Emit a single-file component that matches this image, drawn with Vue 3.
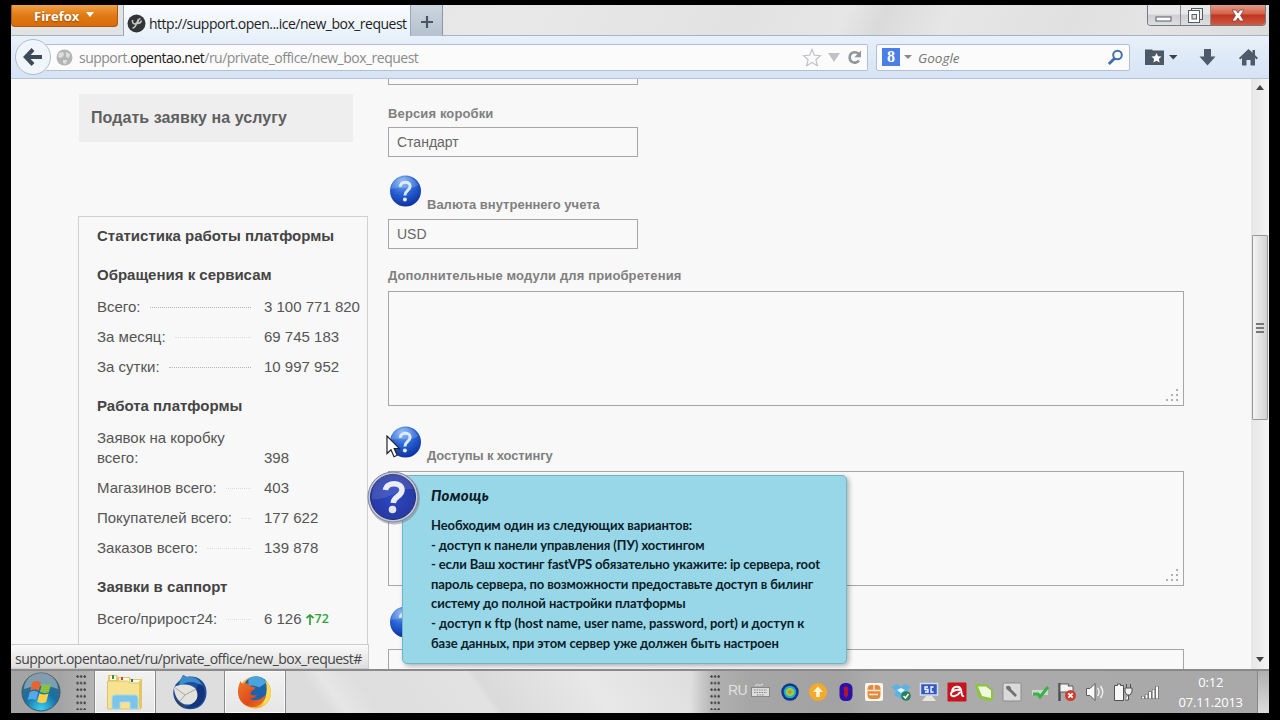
<script setup>
const stats = [
  {
    title: 'Обращения к сервисам',
    rows: [
      { label: 'Всего:', value: '3 100 771 820', dark: true },
      { label: 'За месяц:', value: '69 745 183' },
      { label: 'За сутки:', value: '10 997 952', dark: true }
    ]
  },
  {
    title: 'Работа платформы',
    rows: [
      { label: 'Заявок на коробку всего:', value: '398', double: true },
      { label: 'Магазинов всего:', value: '403' },
      { label: 'Покупателей всего:', value: '177 622' },
      { label: 'Заказов всего:', value: '139 878' }
    ]
  },
  {
    title: 'Заявки в саппорт',
    rows: [{ label: 'Всего/прирост24:', value: '6 126', growth: '72' }]
  }
]

const helpLines = [
  'Необходим один из следующих вариантов:',
  '- доступ к панели управления (ПУ) хостингом',
  '- если Ваш хостинг fastVPS обязательно укажите: ip сервера, root',
  'пароль сервера, по возможности предоставьте доступ в билинг',
  'систему до полной настройки платформы',
  '- доступ к ftp (host name, user name, password, port) и доступ к',
  'базе данных, при этом сервер уже должен быть настроен'
]
</script>

<template>
  <div class="screen">
    <svg class="defs" width="0" height="0">
      <defs>
        <radialGradient id="ball" cx="0.4" cy="0.2" r="0.85">
          <stop offset="0" stop-color="#7fb2f0" />
          <stop offset="0.45" stop-color="#2a66d8" />
          <stop offset="1" stop-color="#0a2c9c" />
        </radialGradient>
        <radialGradient id="bigBall" cx="0.5" cy="0.5" r="0.6">
          <stop offset="0" stop-color="#2c48c4" />
          <stop offset="1" stop-color="#26369c" />
        </radialGradient>
        <radialGradient id="orb" cx="0.5" cy="0.95" r="0.9">
          <stop offset="0" stop-color="#3ad0f4" />
          <stop offset="0.5" stop-color="#1670a4" />
          <stop offset="1" stop-color="#46687e" />
        </radialGradient>
        <linearGradient id="fox" x1="0" y1="0" x2="1" y2="1">
          <stop offset="0" stop-color="#f07a28" />
          <stop offset="0.6" stop-color="#de4a1c" />
          <stop offset="1" stop-color="#e87c22" />
        </linearGradient>
        <symbol id="ask" viewBox="0 0 32 32">
          <circle cx="16.5" cy="16" r="15.5" fill="url(#ball)" />
          <path d="M2 14a14 13 0 0 1 27-4c-6 6-16 1-27 4z" fill="#fff" opacity=".18" />
          <path d="M11.3 11.7c0-6 9.800-6 9.800-.5 0 4.300-5.200 4-5.200 9.300" fill="none" stroke="#dfeafd" stroke-width="3" />
          <circle cx="15.9" cy="24.4" r="2" fill="#dfeafd" />
        </symbol>
      </defs>
    </svg>

    <div class="window">
      <header class="titlebar">
        <div class="menu-button">Firefox<i class="caret white"></i></div>
        <div class="tab">
          <svg width="19" height="19" viewBox="0 0 19 19">
            <circle cx="9.5" cy="9.5" r="9" fill="#333436" />
            <path d="M5.5 6c-.5 4 2.500 5 4.500 2.500l1.500-3.500M10 8.500c-1 3-2 5.500-4.500 5.500M13.500 4.500c-2 0-2.500 3-3 5 2 0 3.500-1 4-3" fill="none" stroke="#c4c4c4" stroke-width="1.5" />
          </svg>
          <span class="tab-title">http://support.open...ice/new_box_request</span>
        </div>
        <div class="new-tab">
          <svg width="12" height="12" viewBox="0 0 12 12"><path d="M6 0v12M0 6h12" stroke="#4a5664" stroke-width="2.2" /></svg>
        </div>
        <div class="controls">
          <div class="ctl">
            <svg width="18" height="6" viewBox="0 0 18 6"><rect x="1" y="1" width="15" height="4" fill="#fff" stroke="#555b66" /></svg>
          </div>
          <div class="ctl restore">
            <svg width="17" height="17" viewBox="0 0 17 17">
              <rect x="4.5" y="1.5" width="11" height="11" fill="#eee" stroke="#555b66" />
              <rect x="1.5" y="3.5" width="11" height="12" fill="#fff" stroke="#555b66" />
              <rect x="5" y="7.5" width="4.5" height="4.5" fill="#ddd" stroke="#555b66" />
            </svg>
          </div>
          <div class="ctl close">
            <svg width="14" height="13" viewBox="0 0 14 13">
              <path d="M1 1h4l2 3 2-3h4L9.500 6.500 13 12H9L7 9l-2 3H1l3.500-5.500z" fill="#fff" stroke="#7c4038" stroke-width=".8" />
            </svg>
          </div>
        </div>
      </header>

      <nav class="toolbar">
        <div class="back">
          <svg width="20" height="18" viewBox="0 0 20 18"><path d="M10 1.500 2.800 9l7.200 7.500M3 9h16" fill="none" stroke="#3e4a58" stroke-width="4" /></svg>
        </div>
        <div class="address">
          <svg class="globe" width="17" height="17" viewBox="0 0 17 17">
            <circle cx="8.5" cy="8.5" r="8" fill="#b4b4b4" />
            <path d="M3 4l4-1 1 3-3 3-3-1zM10 3l4 2-1 4-3-1zM7 11l4 0-1 4-3-1z" fill="#dedede" />
          </svg>
          <span class="url">support.<b>opentao.net</b>/ru/private_office/new_box_request</span>
          <svg class="star" width="20" height="19" viewBox="0 0 20 19"><path d="M10 1.500l2.400 5.700 6.100.5-4.600 4 1.400 6-5.300-3.200-5.300 3.200 1.400-6-4.600-4 6.100-.5z" fill="#fafafa" stroke="#c4c6ca" stroke-width="1.3" /></svg>
          <svg class="drop" width="12" height="9" viewBox="0 0 12 9"><path d="M0 0h12L6 9z" fill="#c0c2c5" /></svg>
          <svg class="reload" width="15" height="15" viewBox="0 0 15 15"><path d="M11.500 3.800A5.200 5.200 0 1 0 12 10.500" fill="none" stroke="#90959a" stroke-width="2.6" /><path d="M14 .5v6.800H7.300z" fill="#90959a" /></svg>
        </div>
        <div class="search">
          <span class="engine">8</span>
          <i class="caret grey"></i>
          <span class="hint">Google</span>
          <svg width="17" height="17" viewBox="0 0 17 17"><circle cx="10.5" cy="6" r="4.3" fill="none" stroke="#4070a6" stroke-width="2" /><path d="M7.500 9.500 1.800 15" stroke="#4070a6" stroke-width="3" /></svg>
        </div>
        <div class="tools">
          <svg width="33" height="17" viewBox="0 0 33 17">
            <path d="M0 .5h7l1 1h11v14.500H0z" fill="#4c5866" />
            <path d="M11.500 4l1.500 3.200 3.500.4-2.600 2.400.7 3.500-3.100-1.700-3.100 1.700.7-3.500L6.500 7.600l3.500-.4z" fill="#fff" />
            <path d="M24 6h8.500l-4.200 4.500z" fill="#38424e" />
          </svg>
          <svg class="down" width="17" height="17" viewBox="0 0 17 17"><path d="M5 0h7v7.500h4.500L8.500 16.500.5 7.500H5z" fill="#4f5b6a" /></svg>
          <svg width="19" height="17" viewBox="0 0 19 17"><path d="M9.500 0l4 3.700V1h2.500v5l3 3-1.200 1.500L16 9v7.500h-4.500V11h-4v5.500H3V9l-1.800 1.500L0 9z" fill="#4f5b6a" /></svg>
        </div>
      </nav>

      <div class="content">
        <main class="page">
          <aside class="sidebar">
            <div class="request-link">Подать заявку на услугу</div>
            <div class="stats">
              <h3 class="stats-title">Статистика работы платформы</h3>
              <section v-for="group in stats" :key="group.title" class="group">
                <h3>{{ group.title }}</h3>
                <div v-for="row in group.rows" :key="row.label" class="row" :class="{ double: row.double }">
                  <span class="label">
                    <span>{{ row.label }}</span>
                    <i v-if="!row.double" class="dots" :class="{ dark: row.dark }"></i>
                  </span>
                  <span class="value">{{ row.value }}</span>
                  <span v-if="row.growth" class="growth">
                    <svg width="8" height="11" viewBox="0 0 8 11"><path d="M4 11V1.500M.5 4l3.500-3 3.500 3" fill="none" stroke="#2da33a" stroke-width="1.7" /></svg>{{ row.growth }}
                  </span>
                </div>
              </section>
            </div>
          </aside>

          <form class="form">
            <div class="input cut"></div>
            <div class="caption">Версия коробки</div>
            <div class="input">Стандарт</div>
            <div class="caption with-help">
              <svg width="32" height="32"><use href="#ask" /></svg><span>Валюта внутреннего учета</span>
            </div>
            <div class="input">USD</div>
            <div class="caption modules">Дополнительные модули для приобретения</div>
            <div class="area">
              <svg width="14" height="13" viewBox="0 0 14 13"><path d="M10 0h2v2h-2zM5 5h2v2H5zM10 5h2v2h-2zM0 10h2v2H0zM5 10h2v2H5zM10 10h2v2h-2z" fill="#b0b0b0" /></svg>
            </div>
            <div class="caption with-help tall">
              <svg width="32" height="32"><use href="#ask" /></svg><span>Доступы к хостингу</span>
            </div>
            <div class="area">
              <svg width="14" height="13" viewBox="0 0 14 13"><path d="M10 0h2v2h-2zM5 5h2v2H5zM10 5h2v2h-2zM0 10h2v2H0zM5 10h2v2H5zM10 10h2v2h-2z" fill="#b0b0b0" /></svg>
            </div>
            <div class="caption with-help last">
              <svg width="32" height="32"><use href="#ask" /></svg>
            </div>
            <div class="area"></div>
          </form>
        </main>

        <div class="scrollbar">
          <i class="arrow up"></i>
          <div class="thumb"><i></i><i></i><i></i></div>
          <i class="arrow dn"></i>
        </div>

        <div class="status">support.opentao.net/ru/private_office/new_box_request#</div>

        <div class="help">
          <svg class="help-icon" width="54" height="54" viewBox="0 0 54 54">
            <circle cx="27" cy="27.5" r="26" fill="#6c7080" opacity=".45" />
            <circle cx="26" cy="26" r="25" fill="#c4c8d4" stroke="#8186a0" />
            <circle cx="26" cy="26" r="22.5" fill="url(#bigBall)" stroke="#1e2c80" />
            <path d="M5 22a21 21 0 0 1 41-4C34 16 22 30 5 28z" fill="#fff" opacity=".12" />
            <path d="M18.500 19c1-8.500 16.500-8.500 16.500 0 0 6.500-8.300 6-8.800 13" fill="none" stroke="#eceef5" stroke-width="5.5" />
            <circle cx="25.5" cy="38.5" r="3.8" fill="#e4e6ee" />
          </svg>
          <h4>Помощь</h4>
          <p v-for="(line, i) in helpLines" :key="i">{{ line }}</p>
        </div>

        <svg class="cursor" width="16" height="24" viewBox="0 0 16 24"><path d="M1 1v17.500l4-3.800 3 7 3.200-1.400-3-6.600h5.300z" fill="#fff" stroke="#222" stroke-width="1.2" /></svg>
      </div>

      <footer class="taskbar">
        <div class="start">
          <svg width="40" height="40" viewBox="0 0 40 40">
            <circle cx="20" cy="20" r="19" fill="url(#orb)" stroke="#3d5566" />
            <path d="M3 17a17 16 0 0 1 34 0c-9-4-23-4-34 0z" fill="#fff" opacity=".35" />
            <path d="M11.500 10c3-1.800 6-1.200 8.500.5l-2.300 8.500c-2.500-1.800-5-2-8.500-.3z" fill="#e86430" />
            <path d="M21.200 11.500c3 1.500 5.500 1.800 9 .2l-2.300 8.300c-3 1.800-6 1.500-9-.2z" fill="#8cc044" />
            <path d="M8.700 20.300c3-1.800 6-1.500 8.500.2L15 28c-3-1.500-5.500-1.500-8.300 0z" fill="#58a8e8" />
            <path d="M18.500 21.300c3 1.700 6 1.700 9 .2l-2.300 8.500c-3 1.500-6 1.300-9-.3z" fill="#fcd04c" />
          </svg>
          <i class="grip"></i>
        </div>
        <div class="task active">
          <svg width="38" height="38" viewBox="0 0 38 38">
            <path d="M2 2h9l1 2h12l1 2h11v29H2z" fill="#e6c766" />
            <path d="M4 3h6v4H4zM13 5h10v4H13zM24 7h10v4H24z" fill="#fffbe8" />
            <path d="M6 2h2v4H6z" fill="#3c8c4c" />
            <path d="M15 4h2v3h-2z" fill="#d04434" />
            <path d="M25 6h2v3h-2z" fill="#3c6c7c" />
            <path d="M1.500 8h20l2 2h11v26h-33z" fill="#f6e290" stroke="#dcc268" />
            <path d="M33 8h3v26h-3z" fill="#e4c662" />
            <path d="M6 36V25q0-3 3-3h20q3 0 3 3v11h-8v-7H14v7z" fill="#7cc4e8" stroke="#a8daf0" />
          </svg>
        </div>
        <div class="task">
          <svg width="38" height="38" viewBox="0 0 38 38">
            <path d="M12 2l4 2c9-2 17 3 19 11 2 9-2 17-9 20-6 2-12 2-17-2C2 27 0 18 5 11c2-2 5-4 7-9z" fill="#1d4f9c" />
            <path d="M12 2l4 2c8-1 13 3 16 10-7-6-16-7-24 0 0-5 2-8 4-12z" fill="#3c8ccc" />
            <path d="M32 13c4 9 1 18-7 21-4 1-8 1-11 0 8-1 14-8 12-17-1-5 2-8 6-4z" fill="#14347c" />
            <path d="M3 14c6-3 15-4 21 1 4 6 3 12-2 15-3 2-8 2-11 0-5-3-8-9-8-16z" fill="#e4e2dc" />
            <path d="M3 14l11 8L25 16M14 22l-5 6" fill="none" stroke="#a8a6a0" />
            <path d="M3 22c2 6 7 10 14 12-8 1-13-4-14-12z" fill="#38404c" />
          </svg>
        </div>
        <div class="task active">
          <svg width="34" height="34" viewBox="0 0 36 36">
            <circle cx="18" cy="18.5" r="17" fill="#f6b434" />
            <path d="M7 9C11 0 25-1 30 7c5 8 2 18-5 21-8 2-16-3-18-10z" fill="#1f62ac" />
            <path d="M11 4c6-5 15-3 19 4l-7 5c-4-1-7-3-12-1z" fill="#48a4dc" />
            <path d="M29 6c7 7 8 17 1 24l-5 3c5-9 7-18 4-27z" fill="#fcdc50" />
            <path d="M3 6c0 2 1 3 3 3 3-1 5 0 7 3l5 1c1 3-4 3-5 6 1 3 4 3 7 2-2 4-6 4-8 4 6 4 13 1 17-4 0 5-4 10-8 12-9 3-17-2-20-9-2-6-1-13 2-18z" fill="url(#fox)" />
          </svg>
        </div>
        <div class="empty"></div>
        <div class="tray">
          <i class="grip"></i>
          <span class="lang">RU</span>
          <svg class="kbd" width="19" height="14" viewBox="0 0 19 14"><path d="M4 3c2-3 4 1 8-2" fill="none" stroke="#f0f0f0" /><rect x=".5" y="4.5" width="18" height="9" fill="#dcdcdc" stroke="#888" /><path d="M3 7h13M3 9.500h13M6 12h7" stroke="#888" stroke-dasharray="1.5 1" /></svg>
          <div class="icons">
            <svg viewBox="0 0 20 20"><circle cx="10" cy="10" r="8.7" fill="#12348e" /><circle cx="10" cy="10" r="6.3" fill="#26a8c8" /><circle cx="10" cy="10" r="4.3" fill="#8ed048" /><circle cx="10" cy="10" r="1.8" fill="#f07828" /></svg>
            <svg viewBox="0 0 20 20"><circle cx="10" cy="10" r="9" fill="#f5aa2c" /><path d="M10 4.500l5 5.500h-3.200v5H8.200v-5H5z" fill="#fff8d8" /></svg>
            <svg viewBox="0 0 20 20"><rect x="3.5" y="1" width="13" height="18" rx="5.5" fill="#2a12a8" /><path d="M10 4c3 2 3 3 1.500 5.500C13 12 12 14 10 16c-2-2-3-4-1.500-6.500C7 7 7 6 10 4z" fill="#b01438" /></svg>
            <svg viewBox="0 0 20 20"><rect x="1" y="1" width="18" height="18" rx="2" fill="#fcf6ee" /><rect x="3.5" y="3" width="13" height="14" rx="4" fill="#e08a40" /><path d="M10 3v6M3.500 8.500h13M5 12.500h9" stroke="#fbe8d0" stroke-width="1.4" /></svg>
            <svg viewBox="0 0 20 20"><path d="M0 5l6-3 4 3 4-3 6 3-4 3 3 4-8 5-8-4 2-4z" fill="#58b4e4" /><path d="M6 8l4-2 4 2-4 3z" fill="#e8f6fc" /><circle cx="15" cy="14" r="4.8" fill="#2c8058" /><path d="M12.500 14l2 2 3-4" fill="none" stroke="#fff" stroke-width="1.5" /></svg>
            <svg viewBox="0 0 20 20"><rect x="1.5" y="1.5" width="17" height="11.5" fill="#3458c4" stroke="#d4dcf4" stroke-width="1.5" /><path d="M9 5H6v2.500h3V10H6M14.500 5H12v5h2.500" fill="none" stroke="#fff" stroke-width="1.3" /><path d="M7 14h6l4 5H3z" fill="#e8e4dc" /></svg>
            <svg viewBox="0 0 20 20"><rect x=".5" y=".5" width="19" height="19" rx="1" fill="#c8141c" /><path d="M5 9c1-5 8-6 9-1l1 5q.5 1.500 2 1M13 8c-3-1-9 1-9 4 0 4 7 2 9-2" fill="none" stroke="#fff" stroke-width="1.9" /></svg>
            <svg viewBox="0 0 20 20"><path d="M1 2h12l2 3 4 3v10l-5 1-9-3-2-6z" fill="#8cc63c" /><path d="M4 4.500h8l5 4v7.500l-9-2z" fill="#f2f8e0" /></svg>
            <svg viewBox="0 0 20 20"><rect x="1" y="1" width="18" height="18" rx="1" fill="#dadada" stroke="#8c8c8c" /><path d="M6 6l8 8" stroke="#707070" stroke-width="2.6" /><path d="M4 6c0-3 4-3 5 0s-3 4-5 0" fill="#707070" /></svg>
            <svg viewBox="0 0 20 20"><path d="M2 8h16v5H2z" fill="#d0d8d0" /><path d="M3 12h5l2 3 8-10" fill="none" stroke="#34b444" stroke-width="3" /></svg>
            <svg viewBox="0 0 20 20"><path d="M2.500 1v18" stroke="#505050" stroke-width="2.5" /><path d="M3 2h9l-1 2h5v8H9l1-2H3z" fill="#f4f4f4" stroke="#5c5c5c" /><circle cx="13.5" cy="13.5" r="5.5" fill="#d23c30" /><path d="M11.300 11.300l4.400 4.400M15.700 11.300l-4.400 4.400" stroke="#fff" stroke-width="1.8" /></svg>
            <svg viewBox="0 0 20 20"><path d="M1.500 6.500H5L10 1.500v17L5 13.500H1.500z" fill="#f8f8f8" stroke="#5c5c5c" /><path d="M12.500 6c2 2 2 6 0 8M15.500 4c3 4 3 8 0 12" fill="none" stroke="#f0f0f0" stroke-width="1.4" /></svg>
            <svg viewBox="0 0 20 20"><path d="M1.500 3.500h3V2h3v1.500h3v15h-9z" fill="#f8f8f8" stroke="#505050" /><path d="M12 6h7v4l-2 3h-3l-2-3zM13.500 2v4M17.500 2v4M15.500 13v5H12" fill="#f0f0f0" stroke="#505050" /></svg>
            <svg viewBox="0 0 20 20"><path d="M3 14v3M6.500 12v5M10 9.500V17M13.500 7v10M17 4v13" stroke="#5c5c5c" stroke-width="3.2" /><path d="M3 14.500v2M6.500 12.500v4M10 10v6.500M13.500 7.500v9M17 4.500v12" stroke="#fafafa" stroke-width="2" /></svg>
          </div>
          <div class="clock"><span>0:12</span><span>07.11.2013</span></div>
          <div class="peek"></div>
        </div>
      </footer>
    </div>
  </div>
</template>

<style>
body {
  margin: 0;
  background: #000;
}
</style>

<style scoped>
* { box-sizing: border-box; }
.screen {
  width: 1280px;
  height: 720px;
  padding: 5px 11px 7px;
  background: #000;
  overflow: hidden;
  font-family: "Open Sans", "Noto Sans", sans-serif;
}
.defs { position: absolute; }
.window {
  width: 1258px;
  height: 708px;
  display: flex;
  flex-direction: column;
  background: #f8f8f8;
}
svg { display: block; flex: none; }
.caret {
  width: 0;
  height: 0;
  border: 4px solid transparent;
  border-bottom: 0;
}
.caret.white { border-top: 5px solid #fff; }
.caret.grey { border-top-color: #888; }

/* title bar */
.titlebar {
  height: 31px;
  display: flex;
  align-items: flex-start;
  background: linear-gradient(115deg, #e2e2e2 0 8%, #e8e8e8 40%, #e2e2e2 58%, #e6e6e6 66%, #dadada 69%, #e6e6e6 74%, #e0e0e0 84%, #e4e4e4 90%, #dcdcdc);
  border-bottom: 1px solid #a9b4c0;
}
.menu-button {
  width: 107px;
  height: 22px;
  display: flex;
  align-items: center;
  padding-left: 22px;
  gap: 7px;
  color: #fff;
  font-size: 13px;
  font-weight: 700;
  text-shadow: 0 1px 2px #8a4a08;
  background: linear-gradient(#efa045, #e07a14 50%, #d96c08);
  border: 1px solid #a65c18;
  border-top: 0;
  border-radius: 0 0 4px 4px;
}
.menu-button .caret { margin-top: -3px; }
.tab {
  width: 288px;
  height: 31px;
  margin-left: 5px;
  padding: 5px 0 0 3px;
  display: flex;
  align-items: center;
  gap: 3px;
  background: linear-gradient(#fafcfe, #e9f1fb);
  border: 1px solid #9aa6b4;
  border-width: 0 1px;
}
.tab-title {
  font-size: 14px;
  letter-spacing: -0.5px;
  color: #1d1d1d;
  white-space: nowrap;
}
.new-tab {
  width: 32px;
  height: 31px;
  display: flex;
  align-items: center;
  justify-content: center;
  padding-top: 2px;
  background: linear-gradient(#ccd6e0, #b4c1ce);
  border-right: 1px solid #8c98a6;
}
.controls {
  height: 21px;
  margin-left: auto;
  margin-right: 3px;
  display: flex;
  border: 1px solid #777c84;
  border-top: 0;
  border-radius: 0 0 4px 4px;
  overflow: hidden;
}
.ctl {
  width: 33px;
  display: flex;
  align-items: center;
  justify-content: center;
  background: linear-gradient(#e8e8e8 45%, #cfcfcf 50%, #dedede);
  border-right: 1px solid #888d94;
}
.ctl:first-child { padding-top: 8px; }
.ctl.restore { width: 30px; }
.ctl.close {
  width: 54px;
  border-right: 0;
  background: linear-gradient(#e39a88, #d4604a 45%, #bf3420 50%, #d05a40);
}

/* navigation toolbar */
.toolbar {
  height: 43px;
  display: flex;
  align-items: center;
  background: linear-gradient(#e8f0fa, #d6e3f4);
  border-bottom: 1px solid #b5c4d8;
}
.back {
  width: 36px;
  height: 36px;
  margin-left: 4px;
  display: flex;
  align-items: center;
  justify-content: center;
  background: #f0f5fb;
  border: 1px solid #b0bccb;
  border-radius: 50%;
  z-index: 1;
}
.address {
  width: 822px;
  height: 27px;
  margin-left: -5px;
  padding-left: 10px;
  display: flex;
  align-items: center;
  background: #fbfbfc;
  border: 1px solid #b0bfd2;
  border-left: 0;
  border-radius: 0 2px 2px 0;
}
.url {
  margin-left: 6px;
  padding-top: 1px;
  font-size: 14px;
  letter-spacing: -0.51px;
  color: #8a8a8a;
  white-space: nowrap;
}
.url b { font-weight: 400; color: #1a1a1a; }
.star { margin-left: auto; }
.drop { margin-left: 8px; }
.reload { margin: 0 5px 0 7px; }
.star { position: relative; left: 2px; }
.search {
  width: 254px;
  height: 27px;
  margin-left: 8px;
  padding: 0 5px;
  display: flex;
  align-items: center;
  background: #fbfbfc;
  border: 1px solid #b0bfd2;
  border-radius: 2px;
}
.engine {
  width: 18px;
  height: 18px;
  text-align: center;
  color: #fff;
  background: #4a7fe6;
  font: 700 16px/18px "Liberation Serif", serif;
}
.search .caret { margin-left: 4px; }
.hint {
  flex: 1;
  margin-left: 6px;
  padding-top: 1px;
  font-size: 13.5px;
  font-style: italic;
  color: #777;
}
.tools { display: flex; align-items: center; margin-left: 15px; }
.tools .down { margin: 0 23px 0 21px; }

/* page */
.content {
  height: 590px;
  display: flex;
  position: relative;
  overflow: hidden;
}
.page {
  width: 1240px;
  display: flex;
  font-family: "Liberation Sans", Arial, sans-serif;
}
.sidebar { width: 290px; margin-left: 67px; }
.request-link {
  width: 274px;
  height: 48px;
  margin: 15px 0 0 1px;
  padding-left: 12px;
  line-height: 48px;
  font-size: 16px;
  font-weight: 700;
  letter-spacing: 0.08px;
  color: #5f5f5f;
  background: #eee;
}
.stats {
  height: 460px;
  margin-top: 74px;
  padding-left: 18px;
  border: 1px solid #d0d0d0;
  color: #555;
  font-size: 15px;
}
.stats h3 {
  height: 37px;
  margin: 0;
  line-height: 40px;
  font-size: 15px;
  font-weight: 700;
  color: #444;
  white-space: nowrap;
}
.stats .stats-title { height: 38px; line-height: 38px; }
.group + .group { margin-top: 4px; }
.row {
  height: 30px;
  display: flex;
  align-items: center;
  line-height: 20px;
  white-space: nowrap;
}
.row .label {
  width: 154px;
  margin-right: 13px;
  display: flex;
  align-items: center;
  gap: 9px;
}
.row.double { height: 50px; align-items: flex-end; padding-bottom: 5px; }
.row.double .label { white-space: normal; }
.dots { flex: 1; border-top: 1px dotted #ddd; }
.dots.dark { border-color: #b4b4b4; }
.growth {
  display: flex;
  align-items: center;
  gap: 1px;
  margin-left: 4px;
  font: 600 12.5px/20px "Open Sans", sans-serif;
  color: #2da33a;
}

/* request form */
.form {
  width: 796px;
  margin-left: 20px;
  font-size: 14px;
}
.input, .area {
  border: 1px solid #a6a6a6;
  background: #f9f9f9;
}
.input {
  width: 250px;
  height: 30px;
  padding-left: 8px;
  line-height: 28px;
  color: #666;
}
.input.cut { height: 6px; border-top: 0; }
.area {
  height: 115px;
  display: flex;
  justify-content: flex-end;
  align-items: flex-end;
  padding: 3px;
}
.caption {
  height: 42px;
  padding-top: 19px;
  line-height: 20px;
  font-size: 13px;
  font-weight: 700;
  letter-spacing: 0.13px;
  color: #7f7f7f;
}
.caption.modules { padding-top: 17px; }
.caption.with-help {
  height: 62px;
  display: flex;
  padding: 18px 0 0 1px;
  letter-spacing: 0;
}
.with-help span { margin: 20px 0 0 6px; }
.caption.tall { height: 65px; padding-top: 20px; letter-spacing: -0.12px; }
.caption.last { height: 63px; padding-top: 20px; }

.scrollbar {
  width: 18px;
  display: flex;
  flex-direction: column;
  align-items: center;
  padding-right: 1px;
  background: linear-gradient(90deg, #e6e6e6, #f4f4f4);
}
.arrow { border: 4px solid transparent; }
.arrow.up { margin-top: 3px; border-bottom: 5px solid #444; border-top-width: 3px; }
.arrow.dn { margin-top: auto; margin-bottom: 4px; border-top: 5px solid #444; border-bottom-width: 3px; }
.thumb {
  width: 16px;
  height: 185px;
  margin-top: 145px;
  display: flex;
  flex-direction: column;
  align-items: center;
  justify-content: center;
  gap: 2px;
  background: linear-gradient(90deg, #f4f4f4, #d2d2d2);
  border: 1px solid #989898;
  border-radius: 1px;
}
.thumb i { width: 8px; height: 2px; background: #777; }

/* layers lying over the page */
.status {
  position: absolute;
  left: 0;
  bottom: 0;
  width: 358px;
  height: 25px;
  padding-left: 4px;
  line-height: 27px;
  font-size: 14px;
  letter-spacing: -0.53px;
  white-space: nowrap;
  color: #444;
  background: linear-gradient(#fafafa, #dedede);
  border: 1px solid #ccc;
  border-left: 0;
}
.help {
  position: absolute;
  left: 391px;
  top: 396px;
  width: 445px;
  height: 189px;
  padding: 8px 0 0 28px;
  background: #98d7e7;
  border: 1px solid #6fb7c8;
  border-radius: 5px;
  box-shadow: 2px 2px 5px rgba(0, 0, 0, 0.3);
  color: #0c1c28;
  font-family: Lato, "Open Sans", sans-serif;
  font-weight: 700;
}
.help-icon { position: absolute; left: -36px; top: -5px; }
.help h4 {
  margin: 0 0 10px;
  font-size: 15px;
  font-style: italic;
  font-weight: 900;
  letter-spacing: 0.3px;
  line-height: 22px;
}
.help p {
  margin: 0;
  font-size: 13px;
  line-height: 19.6px;
  letter-spacing: -0.1px;
  white-space: nowrap;
}
.help p:nth-of-type(3) { letter-spacing: -0.15px; }
.help p:nth-of-type(6) { letter-spacing: -0.05px; }
.cursor { position: absolute; left: 375px; top: 356px; }

/* taskbar */
.taskbar {
  height: 44px;
  display: flex;
  border-top: 2px solid #8a8a8a;
  background: #dedede;
}
.start {
  width: 83px;
  display: flex;
  align-items: center;
  padding-left: 10px;
  gap: 15px;
  background: linear-gradient(90deg, #a4a4a4 60%, #b4b4b4);
}
.grip {
  width: 10px;
  height: 35px;
  background: radial-gradient(circle at 1.5px 1.5px, #444 1px, transparent 1.4px) 0 0 / 3.6px 6.6px;
}
.task {
  width: 68px;
  display: flex;
  align-items: center;
  justify-content: center;
}
.task.active {
  width: 62px;
  background: linear-gradient(#f2f2f2, #e6e6e6);
  border: 1px solid #8c8c8c;
  border-width: 0 1px;
  box-shadow: inset 0 0 0 1px #fafafa;
}
.empty {
  flex: 1;
  background: linear-gradient(55deg, #dcdcdc 10%, #e6e6e6 14%, #dedede 22%, #e2e2e2 48%, #dadada 50%, #e8e8e8 75%, #dedede);
}
.tray {
  width: 578px;
  display: flex;
  align-items: center;
  padding-left: 19px;
  background: linear-gradient(90deg, #dedede, #b0b0b0 24px, #a6a6a6 60px, #a2a2a2 150px, #acacac 180px, #a8a8a8);
}
.lang {
  width: 20px;
  margin-left: 8px;
  margin-top: -4px;
  font: 14px "Liberation Sans", sans-serif;
  letter-spacing: -0.5px;
  color: #e0e0e0;
}
.kbd { margin: -4px 0 0 3px; }
.icons { width: 388px; margin-left: 7px; display: flex; }
.icons svg { width: 20px; height: 20px; margin: 0 3.85px; }
.clock {
  width: 94px;
  display: flex;
  flex-direction: column;
  align-items: center;
  line-height: 20px;
  font-size: 13px;
  letter-spacing: -0.2px;
  color: #fff;
}
.peek {
  width: 12px;
  height: 42px;
  margin-left: auto;
  background: linear-gradient(#b0b0b0, #dcdcdc);
  border-left: 1px solid #888;
}
</style>
